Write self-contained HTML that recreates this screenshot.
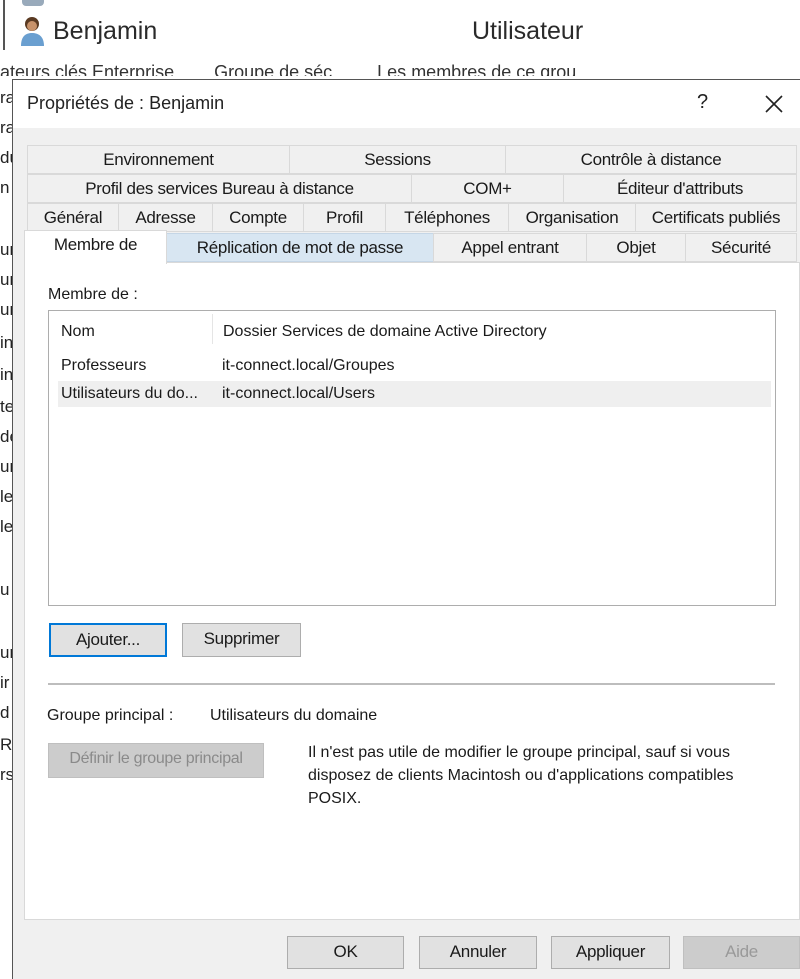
<!DOCTYPE html>
<html><head><meta charset="utf-8"><style>
*{margin:0;padding:0;box-sizing:border-box}
body{width:800px;height:976px;overflow:hidden;background:#fff;position:relative;font-family:"Liberation Sans",sans-serif;color:#1a1a1a}
.a{position:absolute;white-space:nowrap}
.t{position:absolute;background:#f0f0f0;border:1px solid #d9d9d9;font-size:17px;text-align:center;line-height:27px;letter-spacing:-0.3px}
.btn{position:absolute;background:#e1e1e1;border:1px solid #adadad;font-size:17px;text-align:center;line-height:30px;letter-spacing:-0.3px}
.bg{position:absolute;left:0;font-size:17px;color:#222}
</style></head><body>
<div class="a" style="left:3px;top:0;width:2px;height:50px;background:#555"></div>
<div class="a" style="left:22px;top:0;width:22px;height:6px;background:#9ab;border-radius:0 0 4px 4px"></div>
<svg class="a" style="left:18px;top:14px" width="30" height="34" viewBox="0 0 30 34"><circle cx="14" cy="10" r="7" fill="#5a3a22"/><circle cx="14" cy="12" r="5" fill="#c8926a"/><path d="M3 32 C3 22 8 19 14 19 C20 19 26 22 26 32 Z" fill="#6a9fd0"/></svg>
<div class="a" style="left:53px;top:17px;font-size:25px;color:#2a2a2a">Benjamin</div>
<div class="a" style="left:472px;top:17px;font-size:25px;color:#2a2a2a">Utilisateur</div>
<div class="a" style="left:0;top:56px;font-size:18px;color:#333;height:20px;overflow:hidden;line-height:32px">ateurs clés Enterprise &nbsp;&nbsp;&nbsp;&nbsp;&nbsp;&nbsp;&nbsp;Groupe de séc... &nbsp;&nbsp;&nbsp;&nbsp;&nbsp;Les membres de ce grou...</div>
<div class="bg" style="top:88px">ra</div><div class="bg" style="top:118px">ra</div><div class="bg" style="top:148px">du</div><div class="bg" style="top:178px">n</div>
<div class="bg" style="top:240px">ur</div><div class="bg" style="top:270px">ur</div><div class="bg" style="top:300px">ur</div><div class="bg" style="top:333px">in</div><div class="bg" style="top:365px">in</div><div class="bg" style="top:397px">te</div><div class="bg" style="top:427px">de</div><div class="bg" style="top:457px">ur</div><div class="bg" style="top:487px">le</div><div class="bg" style="top:517px">le</div><div class="bg" style="top:580px">u</div><div class="bg" style="top:643px">ur</div><div class="bg" style="top:673px">ir</div><div class="bg" style="top:703px">d</div><div class="bg" style="top:735px">R</div><div class="bg" style="top:765px">rs</div>
<!-- dialog -->
<div class="a" style="left:12px;top:79px;width:800px;height:900px;background:#f0f0f0;border-left:1px solid #555;border-top:1px solid #555"></div>
<div class="a" style="left:13px;top:80px;width:787px;height:48px;background:#fff"></div>
<div class="a" style="left:27px;top:93px;font-size:18px;color:#222">Propriétés de : Benjamin</div>
<div class="a" style="left:697px;top:91px;font-size:20px;color:#222">?</div>
<svg class="a" style="left:765px;top:95px" width="18" height="18"><path d="M1 1L17 17M17 1L1 17" stroke="#222" stroke-width="1.6"/></svg>
<!-- panel -->
<div class="a" style="left:24px;top:262px;width:776px;height:658px;background:#fff;border:1px solid #d9d9d9"></div>
<!-- tabs -->
<div class="t" style="left:27px;top:145px;width:263px">Environnement</div>
<div class="t" style="left:289px;top:145px;width:217px">Sessions</div>
<div class="t" style="left:505px;top:145px;width:292px">Contrôle à distance</div>
<div class="t" style="left:27px;top:174px;width:385px">Profil des services Bureau à distance</div>
<div class="t" style="left:411px;top:174px;width:153px">COM+</div>
<div class="t" style="left:563px;top:174px;width:234px">Éditeur d'attributs</div>
<div class="t" style="left:27px;top:203px;width:92px">Général</div>
<div class="t" style="left:118px;top:203px;width:95px">Adresse</div>
<div class="t" style="left:212px;top:203px;width:92px">Compte</div>
<div class="t" style="left:303px;top:203px;width:83px">Profil</div>
<div class="t" style="left:385px;top:203px;width:124px">Téléphones</div>
<div class="t" style="left:508px;top:203px;width:128px">Organisation</div>
<div class="t" style="left:635px;top:203px;width:162px">Certificats publiés</div>
<div class="t" style="left:166px;top:233px;width:268px;background:#d8e6f2;border-color:#c5d6e6">Réplication de mot de passe</div>
<div class="t" style="left:433px;top:233px;width:154px">Appel entrant</div>
<div class="t" style="left:586px;top:233px;width:100px">Objet</div>
<div class="t" style="left:685px;top:233px;width:112px">Sécurité</div>
<div class="t" style="left:24px;top:230px;width:143px;height:34px;background:#fff;border-bottom:none;line-height:28px">Membre de</div>
<!-- content -->
<div class="a" style="left:48px;top:286px;font-size:16px">Membre de :</div>
<div class="a" style="left:48px;top:310px;width:728px;height:296px;border:1px solid #adadad;background:#fff"></div>
<div class="a" style="left:212px;top:314px;width:1px;height:30px;background:#e5e5e5"></div>
<div class="a" style="left:58px;top:381px;width:713px;height:26px;background:#efefef"></div>
<div class="a" style="left:61px;top:323px;font-size:16px">Nom</div>
<div class="a" style="left:223px;top:323px;font-size:16px">Dossier Services de domaine Active Directory</div>
<div class="a" style="left:61px;top:357px;font-size:16px">Professeurs</div>
<div class="a" style="left:222px;top:357px;font-size:16px">it-connect.local/Groupes</div>
<div class="a" style="left:61px;top:385px;font-size:16px">Utilisateurs du do...</div>
<div class="a" style="left:222px;top:385px;font-size:16px">it-connect.local/Users</div>
<div class="btn" style="left:49px;top:623px;width:118px;height:34px;border:2px solid #0078d7">Ajouter...</div>
<div class="btn" style="left:182px;top:623px;width:119px;height:34px">Supprimer</div>
<div class="a" style="left:48px;top:683px;width:727px;height:2px;background:#bdbdbd"></div>
<div class="a" style="left:47px;top:707px;font-size:16px">Groupe principal :</div>
<div class="a" style="left:210px;top:707px;font-size:16px">Utilisateurs du domaine</div>
<div class="btn" style="left:48px;top:743px;width:216px;height:35px;background:#cccccc;border-color:#bfbfbf;color:#8a8a8a;font-size:16px">Définir le groupe principal</div>
<div class="a" style="left:308px;top:741px;font-size:16px;line-height:23px">Il n'est pas utile de modifier le groupe principal, sauf si vous<br>disposez de clients Macintosh ou d'applications compatibles<br>POSIX.</div>
<div class="btn" style="left:287px;top:936px;width:117px;height:33px">OK</div>
<div class="btn" style="left:419px;top:936px;width:118px;height:33px">Annuler</div>
<div class="btn" style="left:551px;top:936px;width:119px;height:33px">Appliquer</div>
<div class="btn" style="left:683px;top:936px;width:117px;height:33px;background:#cccccc;border-color:#bfbfbf;color:#999">Aide</div>
</body></html>
